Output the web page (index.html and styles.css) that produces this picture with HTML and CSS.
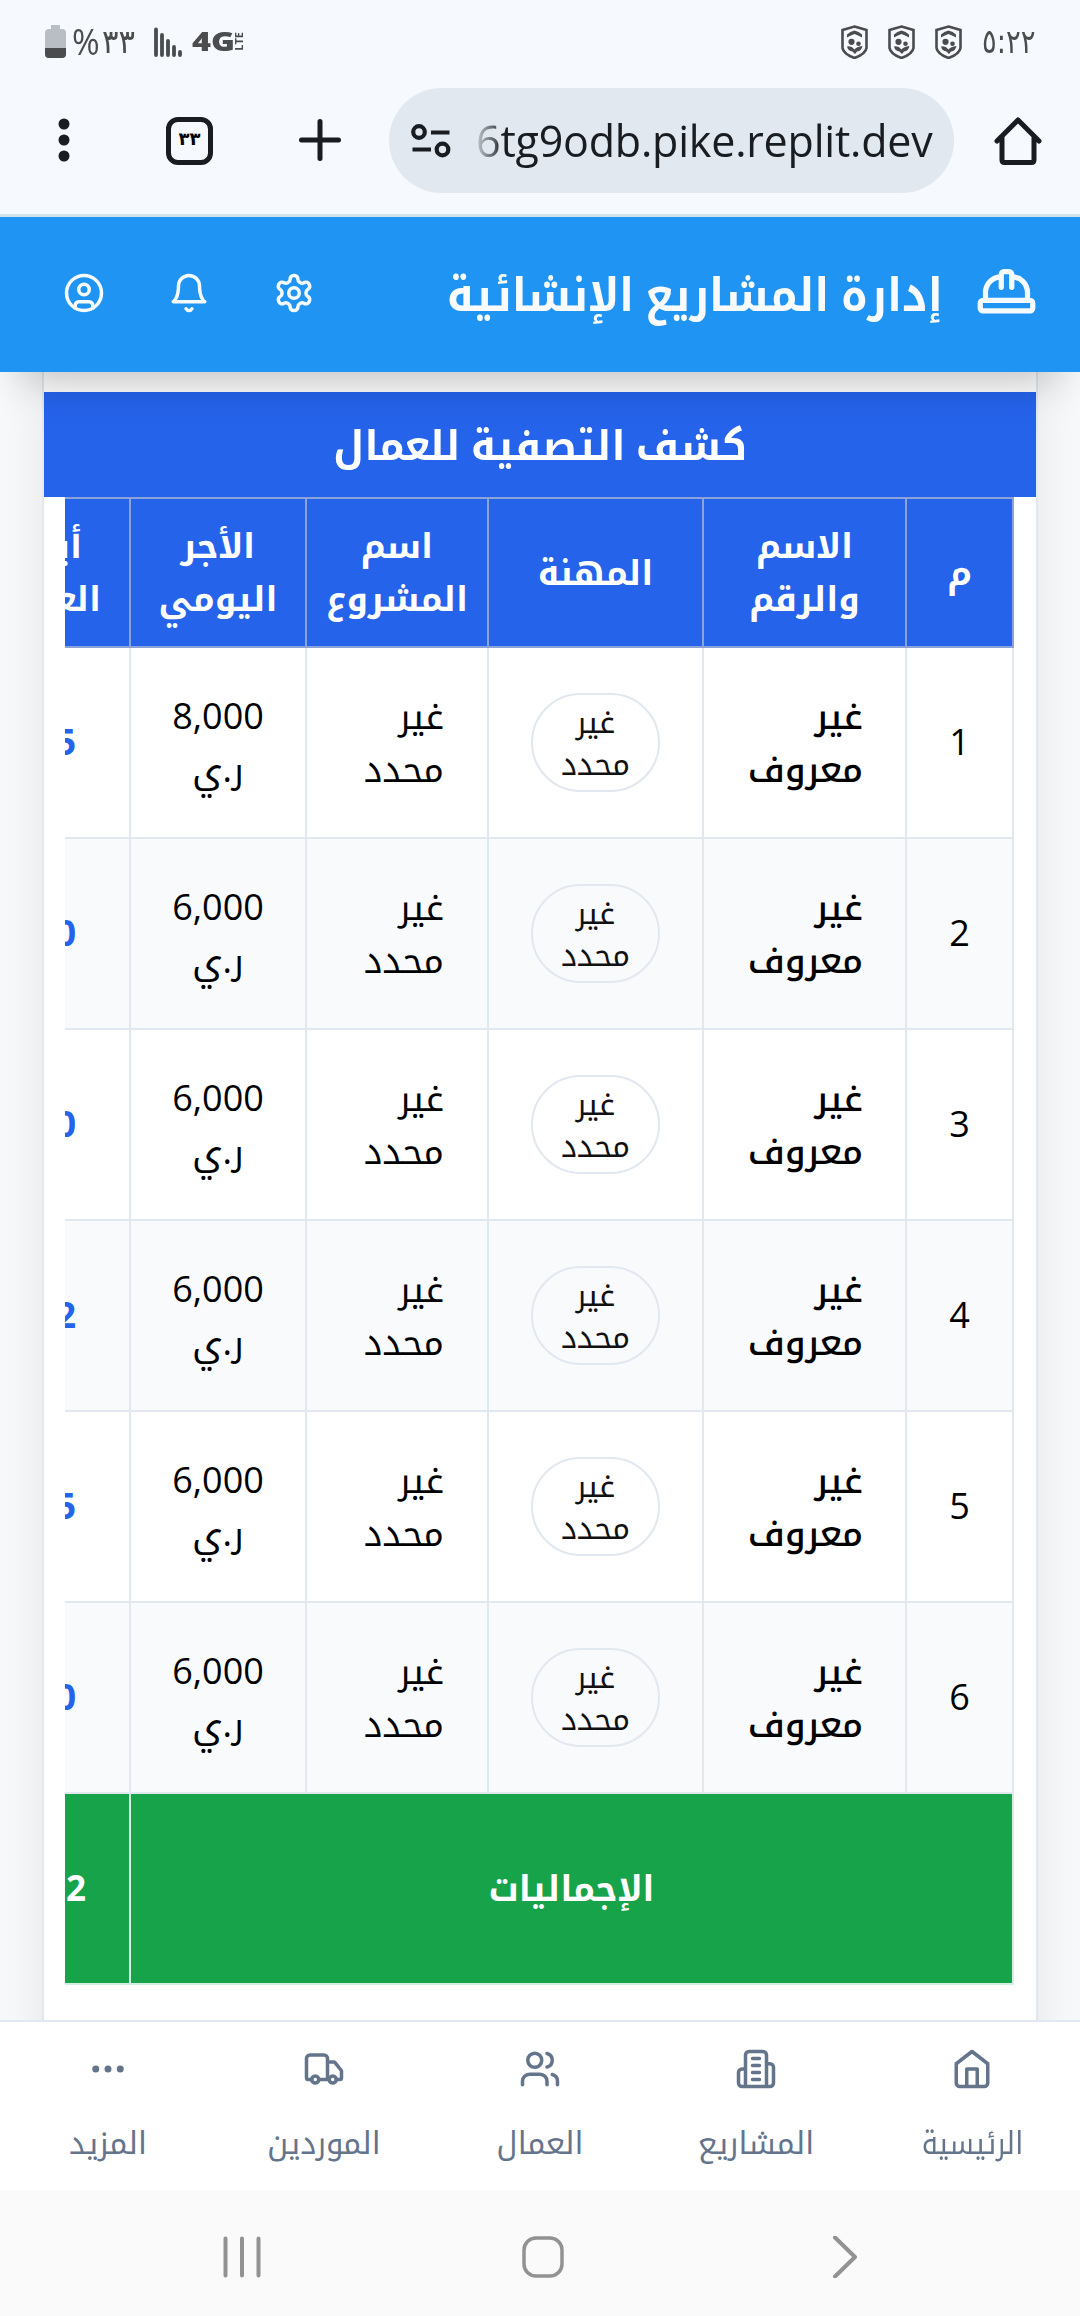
FILE: index.html
```html
<!DOCTYPE html>
<html lang="ar" dir="rtl">
<head>
<meta charset="utf-8">
<title>إدارة المشاريع الإنشائية</title>
<link rel="stylesheet" href="styles.css">
</head>
<body>
<div class="screen">
  <div class="status" dir="ltr">
    <svg class="battery" width="21" height="34" viewBox="0 0 21 34"><path d="M6 0h9v4h2a4 4 0 0 1 4 4v21a4 4 0 0 1-4 4H4a4 4 0 0 1-4-4V8a4 4 0 0 1 4-4h2z" fill="#b9bec4"/><path d="M0 23h21v6a4 4 0 0 1-4 4H4a4 4 0 0 1-4-4z" fill="#4a4c4e"/></svg>
    <span class="pct">%</span><span class="charge">٣٣</span>
    <svg class="signal" width="28" height="30" viewBox="0 0 28 30" stroke="#4a4c4e" stroke-width="3.8" stroke-linecap="round"><path d="M2 2.500v25.500M8 8v20M14 14v14M20 20v8M26 25v3"/></svg>
    <span class="net">4G</span><span class="lte">LTE</span>
    <span class="grow"></span>
    <svg class="shield" width="27" height="34" viewBox="0 0 27 34"><use href="#shield"/></svg>
    <svg class="shield" width="27" height="34" viewBox="0 0 27 34"><use href="#shield"/></svg>
    <svg class="shield" width="27" height="34" viewBox="0 0 27 34"><g id="shield"><path d="M13.500 1.500 25.500 5v18q-1 6-12 10q-11-4-12-10V5z" fill="none" stroke="#4a4c4e" stroke-width="2.600"/><path d="M6 9.500q3-3 7.500-4 4.500 1 7.500 4v3q-3-2-7.500-3.500-4.500 1.500-7.500 3.500zM6 21.500q4-1.500 7.500 3 2-3 8-3.500-1 5-5.500 5.500l-2 2.500-2.500-2.500Q7 26 6 21.500z" fill="#4a4c4e"/><circle cx="10.500" cy="16.800" r="3.100" fill="#4a4c4e"/><circle cx="17.500" cy="18.800" r="2.300" fill="#4a4c4e"/></g></svg>
    <span class="clock">٥:٢٢</span>
  </div>
  <div class="toolbar" dir="ltr">
    <svg class="menu" width="12" height="46" viewBox="0 0 12 46" fill="#191c20"><circle cx="6" cy="7" r="5.500"/><circle cx="6" cy="23" r="5.500"/><circle cx="6" cy="39" r="5.500"/></svg>
    <span class="tabs">٣٣</span>
    <svg class="plus" width="42" height="42" viewBox="0 0 42 42" stroke="#191c20" stroke-width="5" stroke-linecap="round"><path d="M21 2.500v37M2.500 21h37"/></svg>
    <div class="omnibox">
      <svg width="40" height="34" viewBox="0 0 40 34" fill="none" stroke="#191c20" stroke-width="4.200"><circle cx="8" cy="8" r="5.800"/><path d="M20 8.500h18.500M1.500 25.500H20"/><circle cx="31.500" cy="25.500" r="5.800"/></svg>
      <span class="url">6tg9odb.pike.replit.dev</span>
    </div>
    <svg class="home" width="48" height="48" viewBox="0 0 48 48" fill="none" stroke="#191c20" stroke-width="5" stroke-linecap="round" stroke-linejoin="round"><path d="M3 24 24 3l21 21M8 21v22q0 2.500 2.500 2.500h27Q40 45.500 40 43V21"/></svg>
  </div>
  <header class="appbar">
    <svg class="hat" viewBox="0 0 24 24"><path d="M2 18a1 1 0 0 0 1 1h18a1 1 0 0 0 1-1v-2a1 1 0 0 0-1-1H3a1 1 0 0 0-1 1v2zM10 10V5a1 1 0 0 1 1-1h2a1 1 0 0 1 1 1v5M4 15v-3a6 6 0 0 1 6-6M14 6a6 6 0 0 1 6 6v3"/></svg>
    <h1>إدارة المشاريع الإنشائية</h1>
    <div class="actions">
      <svg viewBox="0 0 24 24"><path d="M12.220 2h-.44a2 2 0 0 0-2 2v.18a2 2 0 0 1-1 1.730l-.43.25a2 2 0 0 1-2 0l-.15-.08a2 2 0 0 0-2.730.73l-.22.38a2 2 0 0 0 .73 2.730l.15.1a2 2 0 0 1 1 1.720v.51a2 2 0 0 1-1 1.740l-.15.09a2 2 0 0 0-.73 2.730l.22.38a2 2 0 0 0 2.730.73l.15-.08a2 2 0 0 1 2 0l.43.25a2 2 0 0 1 1 1.730V20a2 2 0 0 0 2 2h.44a2 2 0 0 0 2-2v-.18a2 2 0 0 1 1-1.730l.43-.25a2 2 0 0 1 2 0l.15.08a2 2 0 0 0 2.730-.73l.22-.39a2 2 0 0 0-.73-2.730l-.15-.08a2 2 0 0 1-1-1.740v-.5a2 2 0 0 1 1-1.740l.15-.09a2 2 0 0 0 .73-2.730l-.22-.38a2 2 0 0 0-2.730-.73l-.15.08a2 2 0 0 1-2 0l-.43-.25a2 2 0 0 1-1-1.730V4a2 2 0 0 0-2-2z"/><circle cx="12" cy="12" r="3"/></svg>
      <svg viewBox="0 0 24 24"><path d="M6 8a6 6 0 0 1 12 0c0 7 3 9 3 9H3s3-2 3-9M10.300 21a1.940 1.940 0 0 0 3.400 0"/></svg>
      <svg viewBox="0 0 24 24"><path d="M7 20.660V19a2 2 0 0 1 2-2h6a2 2 0 0 1 2 2v1.660"/><circle cx="12" cy="10" r="3"/><circle cx="12" cy="12" r="10"/></svg>
    </div>
  </header>
  <main class="content">
    <section class="card">
      <h2><span>كشف التصفية للعمال</span></h2>
      <div class="tablewrap">
        <table>
          <colgroup><col class="c1"><col class="c2"><col class="c3"><col class="c4"><col class="c5"><col class="c6"></colgroup>
          <thead><tr><th>م</th><th>الاسم<br>والرقم</th><th>المهنة</th><th>اسم<br>المشروع</th><th>الأجر<br>اليومي</th><th class="days"><span class="up">أيام</span><br>العمل</th></tr></thead>
          <tbody>
            <tr><td>1</td><td class="name">غير<br>معروف</td><td><span class="badge">غير<br>محدد</span></td><td class="project">غير<br>محدد</td><td>8,000<br>ر.ي</td><td class="num">5</td></tr>
            <tr><td>2</td><td class="name">غير<br>معروف</td><td><span class="badge">غير<br>محدد</span></td><td class="project">غير<br>محدد</td><td>6,000<br>ر.ي</td><td class="num">0</td></tr>
            <tr><td>3</td><td class="name">غير<br>معروف</td><td><span class="badge">غير<br>محدد</span></td><td class="project">غير<br>محدد</td><td>6,000<br>ر.ي</td><td class="num">0</td></tr>
            <tr><td>4</td><td class="name">غير<br>معروف</td><td><span class="badge">غير<br>محدد</span></td><td class="project">غير<br>محدد</td><td>6,000<br>ر.ي</td><td class="num">2</td></tr>
            <tr><td>5</td><td class="name">غير<br>معروف</td><td><span class="badge">غير<br>محدد</span></td><td class="project">غير<br>محدد</td><td>6,000<br>ر.ي</td><td class="num">5</td></tr>
            <tr><td>6</td><td class="name">غير<br>معروف</td><td><span class="badge">غير<br>محدد</span></td><td class="project">غير<br>محدد</td><td>6,000<br>ر.ي</td><td class="num">0</td></tr>
          </tbody>
          <tfoot><tr><td colspan="5">الإجماليات</td><td class="sum">2</td></tr></tfoot>
        </table>
      </div>
    </section>
  </main>
  <nav class="tabbar">
    <a><svg viewBox="0 0 24 24"><path d="M3 9l9-7 9 7v11a2 2 0 0 1-2 2H5a2 2 0 0 1-2-2zM9 22V12h6v10"/></svg><span class="narrow">الرئيسية</span></a>
    <a><svg viewBox="0 0 24 24"><path d="M6 22V4a2 2 0 0 1 2-2h8a2 2 0 0 1 2 2v18ZM6 12H4a2 2 0 0 0-2 2v6a2 2 0 0 0 2 2h2M18 9h2a2 2 0 0 1 2 2v9a2 2 0 0 1-2 2h-2M10 6h4M10 10h4M10 14h4M10 18h4"/></svg><span>المشاريع</span></a>
    <a><svg viewBox="0 0 24 24"><path d="M16 21v-2a4 4 0 0 0-4-4H6a4 4 0 0 0-4 4v2M22 21v-2a4 4 0 0 0-3-3.870M16 3.130a4 4 0 0 1 0 7.750"/><circle cx="9" cy="7" r="4"/></svg><span>العمال</span></a>
    <a><svg viewBox="0 0 24 24"><path d="M14 18V6a2 2 0 0 0-2-2H4a2 2 0 0 0-2 2v11a1 1 0 0 0 1 1h2M15 18H9M19 18h2a1 1 0 0 0 1-1v-3.650a1 1 0 0 0-.22-.624l-3.480-4.350A1 1 0 0 0 17.520 8H14"/><circle cx="17" cy="18" r="2"/><circle cx="7" cy="18" r="2"/></svg><span>الموردين</span></a>
    <a><svg viewBox="0 0 24 24"><circle cx="12" cy="12" r="1"/><circle cx="19" cy="12" r="1"/><circle cx="5" cy="12" r="1"/></svg><span>المزيد</span></a>
  </nav>
  <div class="sysnav" dir="ltr">
    <svg width="42" height="42" viewBox="0 0 42 42" stroke-width="4"><path d="M4.500 2.500v37M21 2.500v37M37.500 2.500v37"/></svg>
    <svg width="42" height="42" viewBox="0 0 42 42" stroke-width="3.500"><rect x="2" y="2" width="38" height="38" rx="12"/></svg>
    <svg width="42" height="42" viewBox="0 0 42 42" stroke-width="4"><path d="M12 1.500 32 21 12 40.500"/></svg>
  </div>
</div>
</body>
</html>
```
FILE: styles.css
```css
* { box-sizing: border-box; margin: 0; padding: 0; }
body { width: 1080px; height: 2316px; overflow: hidden; font-family: "Open Sans", "Noto Kufi Arabic", "DejaVu Sans", sans-serif; color: #000; }
svg { display: block; flex: none; }
.screen { width: 1080px; height: 2316px; display: flex; flex-direction: column; }

.status { height: 83px; background: #f6f9fe; display: flex; align-items: center; padding: 0 46px 0 45px; color: #4a4c4e; flex: none; }
.pct { width: 26px; font-size: 36px; margin-left: 6px; transform: scaleX(.93); transform-origin: left; }
.charge { width: 36px; font: 33px/36px "DejaVu Sans", sans-serif; margin-left: 4px; transform: scaleX(.93); transform-origin: left; }
.signal { margin-left: 16px; }
.net { width: 42px; font-weight: 800; font-size: 27px; line-height: 36px; margin: 0 0 1px 10px; transform: scaleX(1.2); transform-origin: left; }
.lte { font-weight: 700; font-size: 11px; line-height: 10px; writing-mode: vertical-rl; transform: rotate(180deg); }
.grow { flex: 1; }
.shield { margin-right: 20px; }
.clock { width: 52px; font: 33px/36px "DejaVu Sans", sans-serif; transform: scaleX(.83); transform-origin: left; white-space: nowrap; }

.toolbar { height: 134px; background: #f6f9fe; border-bottom: 3px solid #d3e3ea; display: flex; align-items: flex-start; flex: none; padding: 5px 38px 0 58px; }
.menu { margin-top: 29px; }
.tabs { margin: 29px 0 0 96px; width: 47px; height: 48px; border: 5px solid #191c20; border-radius: 12px; font: 700 18px/33px "DejaVu Sans", sans-serif; text-align: center; flex: none; }
.plus { margin: 31px 0 0 86px; }
.omnibox { margin-left: 48px; width: 565px; height: 105px; border-radius: 53px; background: #e1e8f0; display: flex; align-items: center; padding-left: 22px; flex: none; }
.url { margin-left: 25px; font: 43px/60px "Open Sans", sans-serif; letter-spacing: -.2px; color: transparent; background: linear-gradient(to right, #c5cad0, #50555a 20px, #191c20 24px); background-clip: text; -webkit-background-clip: text; white-space: nowrap; }
.home { margin: 29px 0 0 40px; }

.appbar { position: relative; z-index: 2; height: 155px; background: #2094f3; flex: none; display: flex; align-items: center; padding: 0 42px 4px 63px; box-shadow: 0 30px 44px -22px rgba(0,0,0,.27); }
.appbar svg, .tabbar svg { fill: none; stroke-width: 2; stroke-linecap: round; stroke-linejoin: round; }
.appbar svg { stroke: #f5faff; width: 42px; height: 42px; }
.appbar .hat { width: 63px; height: 63px; }
h1 { font-size: 46px; line-height: 60px; color: #f8fafc; margin-right: 32px; white-space: nowrap; transform: scaleX(.94); transform-origin: right; }
.actions { margin-right: auto; display: flex; gap: 63px; }

.content { flex: none; height: 1648px; background: #f7f9fb; padding: 0 42px; overflow: hidden; }
.card { height: 1700px; background: #fff; border: solid #e2e8f0; border-width: 0 2px; padding-top: 20px; box-shadow: 0 20px 50px rgba(0,0,0,.08); }
h2 { height: 105px; background: #2563eb; color: #fff; text-align: center; font-size: 41px; line-height: 105px; }
h2 span { display: inline-block; transform: scaleX(.98); }
.tablewrap { width: 949px; margin-right: 22px; overflow: hidden; }
table { width: 1061px; table-layout: fixed; border-collapse: collapse; }
.c1 { width: 107px; } .c2 { width: 203px; } .c3 { width: 215px; } .c4 { width: 182px; } .c5 { width: 176px; } .c6 { width: 176px; }
th { height: 149px; background: #2563eb; color: #fff; border: 2px solid #8ca3d9; font-size: 34.500px; line-height: 53px; font-weight: 700; vertical-align: middle; padding-bottom: 3px; }
th, td { white-space: nowrap; text-align: center; }
td { height: 191px; border: 2px solid #e2e8f0; font-size: 36px; line-height: 53px; vertical-align: middle; padding-bottom: 2px; }
tbody tr:nth-child(even) td { background: #f8fafc; }
td.name { font-weight: 500; text-align: right; padding-right: 42px; }
td.project { text-align: right; padding-right: 43px; }
.badge { display: inline-flex; align-items: center; justify-content: center; vertical-align: middle; width: 129px; height: 99px; border: 2px solid #e2e8f0; border-radius: 50px; font-size: 31px; line-height: 42px; color: #111; padding-bottom: 2px; position: relative; top: 1px; }
.days { text-align: right; padding-right: 28px; }
.days .up { padding-right: 19px; }
td.num { text-align: right; padding-right: 53px; color: #2563eb; font-weight: 700; }
tfoot td { background: #16a34a; color: #fff; font-size: 35px; font-weight: 700; border-color: #d3efe0; border-top-color: #e2e8f0; }
td.sum { text-align: right; padding-right: 43px; }

.tabbar { position: relative; z-index: 2; height: 170px; background: #fff; border-top: 2px solid #e2e8f0; display: grid; grid-template-columns: repeat(5, 216px); flex: none; }
.tabbar a { display: flex; flex-direction: column; align-items: center; padding-top: 26px; color: #64748b; }
.tabbar svg { width: 42px; height: 42px; stroke: #64748b; }
.tabbar span { margin-top: 29px; font-size: 31px; line-height: 46px; white-space: nowrap; }
.tabbar .narrow { transform: scaleX(.9); }
.sysnav { height: 126px; background: #fafafa; display: flex; justify-content: center; align-items: center; gap: 259px; padding: 8px 0 0 5px; flex: none; }
.sysnav svg { fill: none; stroke: #929292; stroke-linecap: round; stroke-linejoin: round; }
```
